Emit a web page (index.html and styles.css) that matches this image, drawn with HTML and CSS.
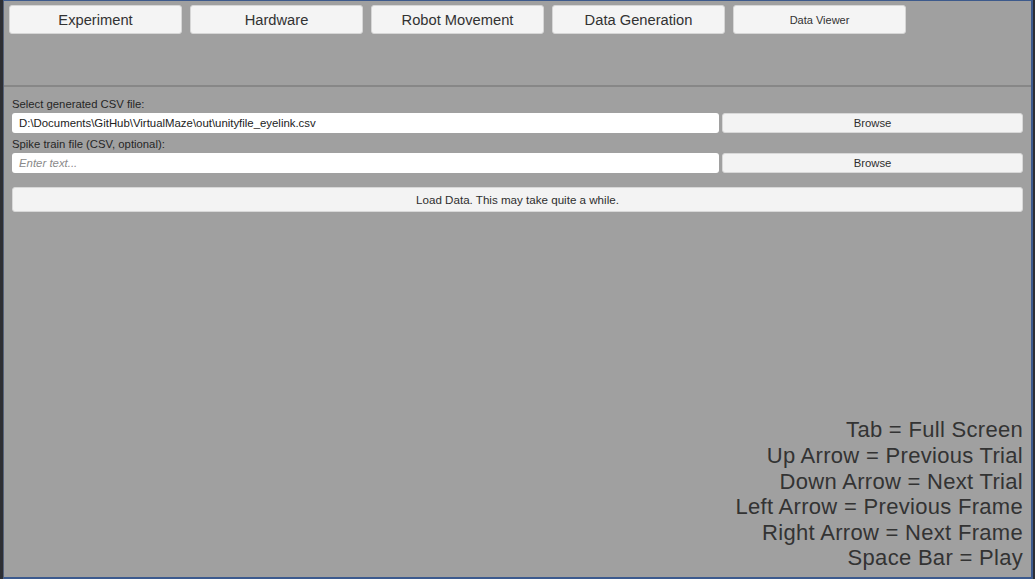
FILE: index.html
```html
<!DOCTYPE html>
<html>
<head>
<meta charset="utf-8">
<link rel="stylesheet" href="styles.css">
</head>
<body>
<div class="frame">
  <div class="toolbar">
    <div class="tab">Experiment</div>
    <div class="tab">Hardware</div>
    <div class="tab">Robot Movement</div>
    <div class="tab">Data Generation</div>
    <div class="tab small">Data Viewer</div>
  </div>
  <div class="sep"></div>
  <div class="panel">
    <div class="label">Select generated CSV file:</div>
    <div class="row">
      <div class="input">D:\Documents\GitHub\VirtualMaze\out\unityfile_eyelink.csv</div>
      <div class="btn browse">Browse</div>
    </div>
    <div class="label second">Spike train file (CSV, optional):</div>
    <div class="row">
      <div class="input placeholder">Enter text...</div>
      <div class="btn browse">Browse</div>
    </div>
    <div class="btn load">Load Data. This may take quite a while.</div>
    <div class="hints">
      <div>Tab = Full Screen</div>
      <div>Up Arrow = Previous Trial</div>
      <div>Down Arrow = Next Trial</div>
      <div>Left Arrow = Previous Frame</div>
      <div>Right Arrow = Next Frame</div>
      <div>Space Bar = Play</div>
    </div>
  </div>
</div>
</body>
</html>
```
FILE: styles.css
```css
* { box-sizing: border-box; }
html, body {
  margin: 0;
  padding: 0;
  width: 1035px;
  height: 579px;
  overflow: hidden;
  background: #2e2f34;
  font-family: "Liberation Sans", Arial, sans-serif;
  color: #323232;
}
.frame {
  margin-left: 3px;
  width: 1030px;
  height: 579px;
  background: #a0a0a0;
  border-top: 1px solid #3d5a8c;
  border-left: 1px solid #56627a;
  border-right: 2px solid #3c5a8e;
  border-bottom: 2px solid #3c5a8e;
  display: flex;
  flex-direction: column;
}
.toolbar {
  height: 84px;
  padding: 4px 0 0 5px;
  display: flex;
  gap: 8px;
  align-items: flex-start;
}
.tab {
  width: 173px;
  height: 29px;
  background: #f4f4f4;
  border: 1px solid #d6d6d6;
  border-radius: 3px;
  font-size: 14.7px;
  display: flex;
  align-items: center;
  justify-content: center;
}
.tab.small { font-size: 11px; }
.sep {
  height: 2px;
  background: #878787;
}
.panel {
  flex: 1;
  display: flex;
  flex-direction: column;
  padding: 10px 8px 6px 8px;
}
.label {
  font-size: 11.3px;
  line-height: 14px;
  height: 16px;
  padding-bottom: 2px;
  color: #262626;
}
.label.second { height: 20px; padding-top: 4px; padding-bottom: 2px; }
.row {
  display: flex;
  gap: 3px;
  height: 20px;
}
.input {
  width: 707px;
  height: 20px;
  background: #ffffff;
  border-radius: 3px;
  font-size: 11.4px;
  line-height: 20px;
  padding-left: 7px;
  color: #222;
}
.input.placeholder {
  font-style: italic;
  color: #8a8a8a;
}
.btn {
  background: #f3f3f3;
  border: 1px solid #d8d8d8;
  border-radius: 3px;
  font-size: 11.3px;
  display: flex;
  align-items: center;
  justify-content: center;
  color: #2e2e2e;
}
.browse { flex: 1; height: 20px; }
.load {
  margin-top: 14px;
  height: 25px;
  font-size: 11.6px;
}
.hints {
  margin-top: auto;
  text-align: right;
  font-size: 22px;
  letter-spacing: 0.3px;
  line-height: 25.6px;
  color: #333;
}
```
